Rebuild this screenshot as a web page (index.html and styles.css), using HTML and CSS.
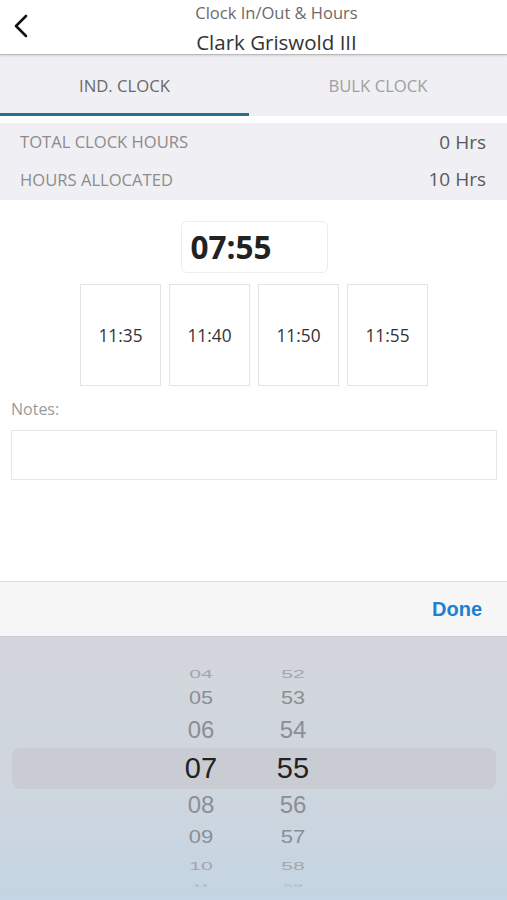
FILE: index.html
```html
<!DOCTYPE html>
<html lang="en">
<head>
    <meta charset="UTF-8">
    <meta name="viewport" content="width=device-width, initial-scale=1.0">
    <title>Clock In/Out &amp; Hours</title>
    <link rel="stylesheet" href="styles.css">
</head>
<body>

<div class="screen">
    <header class="topbar">
        <button class="back" aria-label="Back">
            <svg width="18" height="26" viewBox="0 0 18 26">
                <path d="M14 3 L4 13 L14 23" fill="none" stroke="#111" stroke-width="2.6" stroke-linecap="round" stroke-linejoin="round"/>
            </svg>
        </button>
        <div class="titles">
            <div class="subtitle">Clock In/Out &amp; Hours</div>
            <div class="name">Clark Griswold III</div>
        </div>
    </header>

    <nav class="tabs">
        <div class="tab active">IND. CLOCK</div>
        <div class="tab">BULK CLOCK</div>
    </nav>

    <section class="stats">
        <div class="stat-row">
            <span class="stat-label">TOTAL CLOCK HOURS</span>
            <span class="stat-value">0 Hrs</span>
        </div>
        <div class="stat-row">
            <span class="stat-label">HOURS ALLOCATED</span>
            <span class="stat-value">10 Hrs</span>
        </div>
    </section>

    <main class="content">
        <div class="time-field">07:55</div>

        <div class="quick-times">
            <div class="quick">11:35</div>
            <div class="quick">11:40</div>
            <div class="quick">11:50</div>
            <div class="quick">11:55</div>
        </div>

        <label class="notes-label">Notes:</label>
        <div class="notes-input"></div>
    </main>

    <div class="toolbar">
        <span class="done">Done</span>
    </div>

    <div class="picker">
        <div class="wheel-row r04"><span>04</span><span>52</span></div>
        <div class="wheel-row r05"><span>05</span><span>53</span></div>
        <div class="wheel-row r06"><span>06</span><span>54</span></div>
        <div class="wheel-row selected"><span>07</span><span>55</span></div>
        <div class="wheel-row r08"><span>08</span><span>56</span></div>
        <div class="wheel-row r09"><span>09</span><span>57</span></div>
        <div class="wheel-row r10"><span>10</span><span>58</span></div>
        <div class="wheel-row r11"><span>11</span><span>59</span></div>
    </div>
</div>

</body>
</html>
```

FILE: styles.css
```css
* {
    box-sizing: border-box;
}
body {
    margin: 0;
    font-family: 'Open Sans', 'Noto Sans', sans-serif;
    background-color: #ffffff;
    color: #333333;
}
.screen {
    width: 507px;
    height: 900px;
    display: flex;
    flex-direction: column;
    overflow: hidden;
}

/* header */
.topbar {
    height: 55px;
    flex-shrink: 0;
    display: flex;
    border-bottom: 1px solid #b9b9b9;
    box-shadow: 0 1px 2px rgba(0, 0, 0, 0.12);
    background-color: #ffffff;
    position: relative;
    z-index: 1;
}
.back {
    width: 46px;
    border: none;
    background: none;
    padding: 13px 0 0 12px;
    display: flex;
    align-items: flex-start;
}
.titles {
    flex: 1;
    display: flex;
    flex-direction: column;
    align-items: center;
}
.subtitle {
    font-size: 16.5px;
    color: #6a6a6a;
    line-height: 22px;
    margin-top: 2px;
}
.name {
    font-size: 20.5px;
    color: #333333;
    line-height: 26px;
    margin-top: 5px;
}

/* tabs */
.tabs {
    height: 61px;
    flex-shrink: 0;
    display: flex;
    background-color: #efeff4;
}
.tab {
    flex: 1;
    display: flex;
    align-items: center;
    justify-content: center;
    font-size: 16.7px;
    color: #a0a0a0;
    border-bottom: 3px solid transparent;
    padding-top: 2px;
}
.tab.active {
    flex: 0 0 249px;
    color: #6a6a6a;
    border-bottom-color: #22708e;
}

/* stats */
.stats {
    margin-top: 7px;
    height: 77px;
    flex-shrink: 0;
    background-color: #efeff4;
    display: flex;
    flex-direction: column;
    justify-content: center;
    padding: 0 21px 2px 20px;
}
.stat-row {
    display: flex;
    justify-content: space-between;
    align-items: center;
    height: 40px;
}
.stat-label {
    font-size: 16.6px;
    color: #8c8c8c;
}
.stat-value {
    font-size: 19px;
    color: #5a5a5a;
}

/* content */
.content {
    flex: 1;
    display: flex;
    flex-direction: column;
    padding-top: 21px;
}
.time-field {
    align-self: center;
    width: 147px;
    height: 52px;
    padding-left: 9px;
    border: 1px solid #ececec;
    border-radius: 6px;
    font-size: 31.5px;
    font-weight: 700;
    line-height: 50px;
    color: #222222;
    margin-left: 1px;
}
.quick-times {
    display: flex;
    justify-content: center;
    gap: 8px;
    margin-top: 11px;
    margin-left: 1px;
}
.quick {
    width: 81px;
    height: 102px;
    border: 1px solid #e4e4e4;
    display: flex;
    align-items: center;
    justify-content: center;
    font-size: 17.3px;
    color: #333333;
}
.notes-label {
    margin: 12px 0 0 11px;
    font-size: 16px;
    color: #9b9b9b;
    line-height: 22px;
}
.notes-input {
    margin: 10px 10px 0 11px;
    height: 50px;
    border: 1px solid #e6e6e6;
}

/* picker toolbar */
.toolbar {
    height: 55px;
    flex-shrink: 0;
    border-top: 1px solid #dcdcdc;
    background-color: #f7f7f7;
    display: flex;
    align-items: center;
    justify-content: flex-end;
    padding-right: 25px;
}
.done {
    font-family: 'Liberation Sans', Arial, sans-serif;
    font-weight: 700;
    font-size: 20px;
    color: #1f7fd2;
}

/* wheel */
.picker {
    height: 264px;
    flex-shrink: 0;
    border-top: 1px solid #c8cbd0;
    background: linear-gradient(#d3d6dc, #cfd6de 55%, #c4d5e3);
    padding: 23px 11px 0 12px;
    font-family: 'Liberation Sans', Arial, sans-serif;
}
.wheel-row {
    display: grid;
    grid-template-columns: 159px 60px 32px 60px;
    align-items: center;
    color: #8b8e93;
    font-size: 25px;
}
.wheel-row span {
    text-align: center;
}
.wheel-row span:first-child {
    grid-column: 2;
}
.wheel-row span:last-child {
    grid-column: 4;
}
.r04 { height: 24px; }
.r04 span { transform: scale(0.85, 0.42); color: #a3a6ab; }
.r05 { height: 28px; }
.r05 span { transform: scale(0.9, 0.78); font-size: 24px; }
.r06 { height: 36px; }
.r06 span { transform: scale(0.96, 0.92); font-size: 25px; }
.wheel-row.selected {
    height: 41px;
    background-color: #c9ccd2;
    border-radius: 8px;
    font-size: 29px;
    color: #202226;
}
.r08 { height: 32px; }
.r08 span { transform: scale(0.96, 0.92); }
.r09 { height: 31px; }
.r09 span { transform: scale(0.92, 0.78); font-size: 24px; }
.r10 { height: 19px; }
.r10 span { transform: scale(0.85, 0.45); color: #a3a6ab; }
.r11 { height: 13px; }
.r11 span { transform: scale(0.7, 0.15); color: #b4b8bd; }
```
